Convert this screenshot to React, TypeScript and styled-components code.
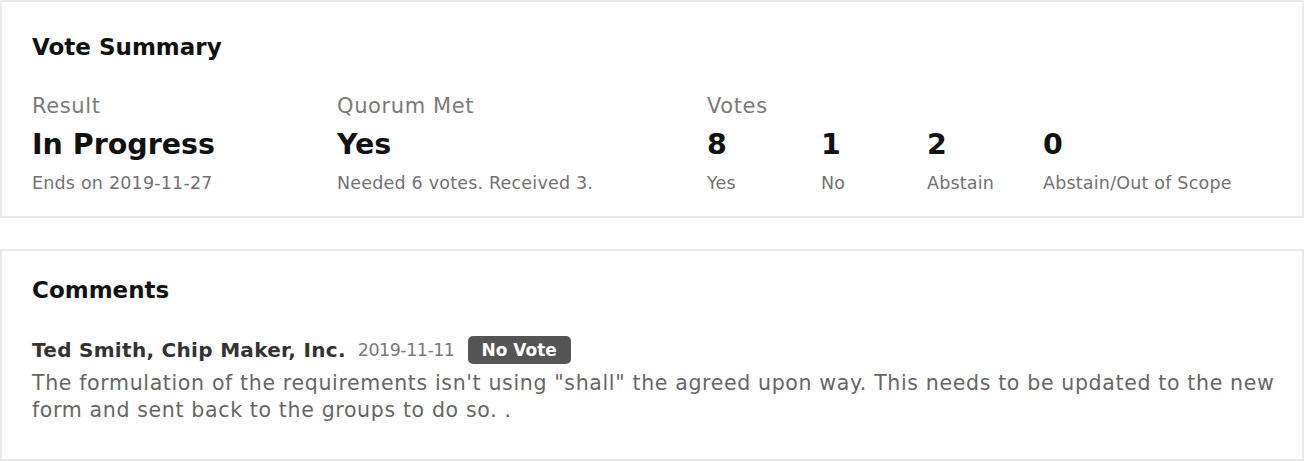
import React from 'react'
import styled, { createGlobalStyle } from 'styled-components'

const GlobalStyle = createGlobalStyle`
    html, body {
        margin: 0;
        padding: 0;
        background: #ffffff;
        font-family: "DejaVu Sans", "Liberation Sans", sans-serif;
        color: #111111;
    }
`

const Page = styled.div`
    display: flex;
    flex-direction: column;
    gap: 31px;
`

const Card = styled.section<{ $top: number; $bottom: number }>`
    border: 2px solid #e8e8e8;
    padding: ${p => p.$top}px 10px ${p => p.$bottom}px 30px;
`

const CardTitle = styled.h2`
    margin: 0;
    font-size: 23px;
    font-weight: 700;
    line-height: 28px;
    color: #111111;
`

const SummaryGrid = styled.div`
    display: grid;
    grid-template-columns: 305px 370px auto;
    margin-top: 31px;
`

const Label = styled.div`
    font-size: 21px;
    font-weight: 400;
    letter-spacing: 0.6px;
    color: #7a7a7a;
    line-height: 28px;
`

const BigValue = styled.div`
    font-size: 28.5px;
    font-weight: 700;
    line-height: 36px;
    margin-top: 7px;
    color: #111111;
`

const SubText = styled.div`
    font-size: 17.5px;
    letter-spacing: 0.2px;
    color: #727272;
    line-height: 24px;
    margin-top: 8px;
`

const VoteRow = styled.div`
    display: flex;
`

const VoteItem = styled.div<{ $w?: number }>`
    width: ${p => (p.$w ? `${p.$w}px` : 'auto')};
`

const CommentHead = styled.div`
    display: flex;
    align-items: center;
    height: 28px;
    margin-top: 32px;
`

const Author = styled.span`
    font-size: 20px;
    font-weight: 700;
    letter-spacing: 0.3px;
    color: #333333;
`

const CommentDate = styled.span`
    margin-left: 12px;
    font-size: 17.5px;
    letter-spacing: -0.5px;
    color: #7a7a7a;
`

const Badge = styled.span`
    margin-left: 13px;
    height: 28px;
    display: inline-flex;
    align-items: center;
    padding: 0 14px;
    background: #555555;
    color: #ffffff;
    font-size: 17px;
    font-weight: 700;
    border-radius: 5px;
`

const CommentBody = styled.p`
    margin: 6px 0 0;
    font-size: 20.5px;
    letter-spacing: 0.65px;
    color: #666666;
    line-height: 27px;
`

const votes = [
    { n: 8, label: 'Yes', w: 114 },
    { n: 1, label: 'No', w: 106 },
    { n: 2, label: 'Abstain', w: 116 },
    { n: 0, label: 'Abstain/Out of Scope' },
]

const App: React.FC = () => {
    return (
        <>
            <GlobalStyle />
            <Page>
                <Card $top={31} $bottom={21}>
                    <CardTitle>Vote Summary</CardTitle>
                    <SummaryGrid>
                        <div>
                            <Label>Result</Label>
                            <BigValue>In Progress</BigValue>
                            <SubText>Ends on 2019-11-27</SubText>
                        </div>
                        <div>
                            <Label>Quorum Met</Label>
                            <BigValue>Yes</BigValue>
                            <SubText>Needed 6 votes. Received 3.</SubText>
                        </div>
                        <div>
                            <Label>Votes</Label>
                            <VoteRow>
                                {votes.map(v => (
                                    <VoteItem key={v.label} $w={v.w}>
                                        <BigValue>{v.n}</BigValue>
                                        <SubText>{v.label}</SubText>
                                    </VoteItem>
                                ))}
                            </VoteRow>
                        </div>
                    </SummaryGrid>
                </Card>
                <Card $top={25} $bottom={35}>
                    <CardTitle>Comments</CardTitle>
                    <CommentHead>
                        <Author>Ted Smith, Chip Maker, Inc.</Author>
                        <CommentDate>2019-11-11</CommentDate>
                        <Badge>No Vote</Badge>
                    </CommentHead>
                    <CommentBody>
                        The formulation of the requirements isn't using "shall" the agreed upon way. This needs to be updated to the new form and sent back to the groups to do so. .
                    </CommentBody>
                </Card>
            </Page>
        </>
    )
}

export default App
